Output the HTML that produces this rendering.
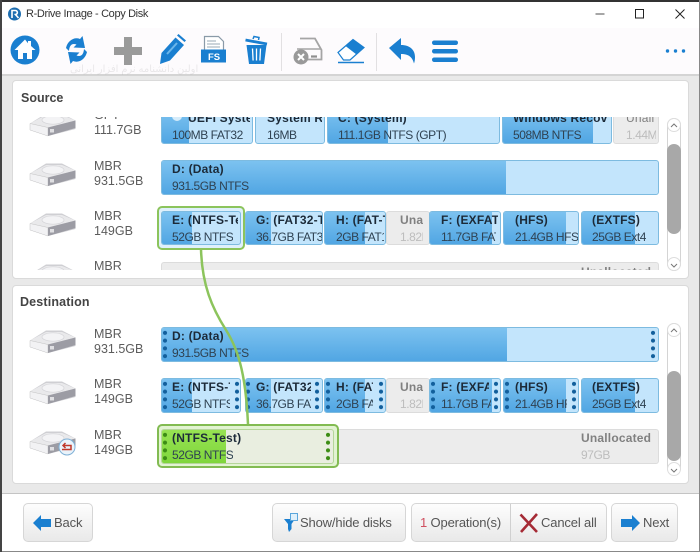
<!DOCTYPE html>
<html><head><meta charset="utf-8"><style>
*{box-sizing:border-box}
html,body{margin:0;padding:0;width:700px;height:552px;overflow:hidden;background:#e9e9e9;font-family:"Liberation Sans",sans-serif}
.a{position:absolute}
.clip{position:absolute;overflow:hidden}
.p{position:absolute;border:1px solid #7dbbe0;border-radius:3px;background:#c3e5fc;overflow:hidden}
.u{position:absolute;border:1px solid #dcdcdc;border-radius:3px;background:#ececec;overflow:hidden}
.f{position:absolute;left:0;top:0;bottom:0;background:linear-gradient(#7cc2f0,#51a6e3)}
.t{position:absolute;white-space:nowrap;overflow:hidden;font-size:12px;line-height:16px;height:16px;color:#2f4252;letter-spacing:-.45px}
.b{font-weight:bold;color:#1c2a38;letter-spacing:.2px}
.g{color:#bdbdbd}.gb{font-weight:bold;color:#808080;letter-spacing:.2px}
.d{position:absolute;width:6px;height:31px;top:1px;background:radial-gradient(circle,#125f9c 1.8px,transparent 2.3px) 0 0/6px 7.75px repeat-y}
.dg{background:radial-gradient(circle,#3c8c14 1.8px,transparent 2.3px) 0 0/6px 7.75px repeat-y}
.m{position:absolute;left:94px;font-size:12.5px;line-height:15px;color:#5c5c5c;white-space:nowrap}
.btn{position:absolute;top:503px;height:39px;border:1px solid #d6d6d6;border-radius:5px;background:linear-gradient(#fdfdfd,#e9e9e9);font-size:13px;color:#555;line-height:37px;white-space:nowrap;letter-spacing:-.15px}
.sb{position:absolute;left:667px;width:14px;border:1px solid #d4d4d4;background:#fff;border-radius:7px}
.th{position:absolute;left:667px;width:14px;background:#a8a8a8;border-radius:7px}
.arr{position:absolute;left:667px;width:14px;height:14px;border:1px solid #ddd;border-radius:7px;background:#fff}
</style></head><body>
<div class="a" style="left:0;top:0;width:700px;height:28px;background:#fff"></div>
<div class="a" style="left:0;top:28px;width:700px;height:47px;background:#fdfbfd"></div>
<div class="a" style="left:0;top:74px;width:700px;height:2px;background:#d4d4d4"></div>

<svg class="a" style="left:0;top:0" width="700" height="76" viewBox="0 0 700 76">
<circle cx="14.5" cy="14" r="6.5" fill="#1c6db0"/><path d="M12 18V10.5h3.2a2 2 0 0 1 .3 4L18.5 18" fill="none" stroke="#fff" stroke-width="1.6"/>
<path d="M595.5 14h9" stroke="#777" stroke-width="1.3"/>
<rect x="635.5" y="9.5" width="8" height="8.5" fill="none" stroke="#222" stroke-width="1"/>
<path d="M675.5 9.5l9 9M684.5 9.5l-9 9" stroke="#222" stroke-width="1"/>
<!-- home -->
<circle cx="25" cy="50" r="14.5" fill="#1a7fd0"/>
<path d="M25 39.5L14.5 50H18v9h5v-6h4v6h5v-9h3.5L31 46v-5h-3v2.200z" fill="#fff"/>
<!-- refresh -->
<path d="M66 48c1.500-7 8-11.500 14-9l2.500-3 2.500 12-11.500-.5 3-3C72 43 69.500 45 69 51z" fill="#1a7fd0"/>
<path d="M87 52c-1.500 7-8 11.500-14 9l-2.500 3-2.500-12 11.500.5-3 3c4.500 1.500 7-.5 7.500-6.500z" fill="#1a7fd0"/>
<!-- plus -->
<path d="M124 37h8v10h10v8h-10v10h-8V55h-10v-8h10z" fill="#9a9a9a"/>
<!-- pencil -->
<path d="M160 64l1.500-11 14-15.500 8.500 7.500-14 15.500z" fill="#1a7fd0"/><path d="M177 35.500l1.500-1.500 7.500 6.500-1.500 1.500z" fill="#1a7fd0"/><path d="M167 54l10-11" stroke="#6cb6ea" stroke-width="2"/>
<!-- FS -->
<path d="M204.500 50V36.500h14l5 5V50" fill="#fff" stroke="#8a9aa8" stroke-width="1.200"/><path d="M207 41h9M207 44h13M207 47h13" stroke="#9aa8b4" stroke-width="1"/>
<rect x="201" y="49.500" width="25" height="13" fill="#1a7fd0"/>
<text x="208" y="60" font-family="Liberation Sans" font-size="9.500" font-weight="bold" fill="#fff">FS</text>
<!-- trash -->
<path d="M245.500 40l21.500 4" stroke="#1a7fd0" stroke-width="2.800"/><path d="M253 39l1-2.500 5 1-.5 2.500" fill="none" stroke="#1a7fd0" stroke-width="1.500"/>
<path d="M246.500 45h20l-2.500 19h-15z" fill="#1a7fd0"/><path d="M252.500 48.500l.6 12M256.500 48.500v12M260.500 48.500l-.6 12" stroke="#fff" stroke-width="1.300"/>
<path d="M281.500 33v38M376.500 33v38" stroke="#e2e0e2" stroke-width="1"/>
<!-- disk x -->
<path d="M300 38.500h15l6.500 11.500v9.500h-22" fill="none" stroke="#a5a5a5" stroke-width="1.800"/><path d="M297 49h24" stroke="#a5a5a5" stroke-width="1.600"/><path d="M311 56.500h6" stroke="#8f8f8f" stroke-width="2.200"/>
<circle cx="301" cy="57" r="7.500" fill="#999"/><path d="M298 54l6 6M304 54l-6 6" stroke="#fff" stroke-width="2"/>
<!-- eraser -->
<path d="M338 52.500L353 39.500l11 8L350 60h-6.500z" fill="#fff" stroke="#1a7fd0" stroke-width="1.200"/><path d="M345.500 46L353 39.500l11 8-7.500 7z" fill="#1a7fd0"/>
<path d="M338 62.500h26" stroke="#1a7fd0" stroke-width="1.600"/>
<!-- undo -->
<path d="M389 48L401 38v7c9 0 14 5 14 12 0 3-.5 5-1 6.500-1.500-6-5-9.500-13-9.500v6z" fill="#1a7fd0"/>
<!-- menu -->
<rect x="432" y="40.500" width="26" height="4.500" rx="2.200" fill="#1a7fd0"/><rect x="432" y="49" width="26" height="4.500" rx="2.200" fill="#1a7fd0"/><rect x="432" y="57.500" width="26" height="4.500" rx="2.200" fill="#1a7fd0"/>
<circle cx="667.500" cy="51" r="1.700" fill="#1a7fd0"/><circle cx="675.500" cy="51" r="1.700" fill="#1a7fd0"/><circle cx="683.500" cy="51" r="1.700" fill="#1a7fd0"/>
<defs>
<g id="disk">
<path d="M1 11.500L17 1.500h16l13.500 7V17L19 24 1 18z" fill="#cfcfd3"/>
<path d="M1 11.500L17 3h16l13.500 5.500L19 15.500z" fill="#e9e9eb"/>
<ellipse cx="24" cy="8" rx="11" ry="4.200" fill="#f3f3f5" stroke="#d4d4d8" stroke-width=".7"/>
<path d="M1 11.500L19 15.500V24L1 18z" fill="#f2f2f4" stroke="#c4c4c4" stroke-width=".5"/>
<path d="M19 15.500L46.500 8.500V16L19 24z" fill="#9c9ca4"/>
<rect x="21" y="17" width="4" height="3.500" fill="#dfdfe2"/>
</g>
</defs>
</svg>
<div class="a" style="left:26px;top:7px;font-size:11px;letter-spacing:-.35px;line-height:14px;color:#333;white-space:nowrap">R-Drive Image - Copy Disk</div>
<div class="a" style="left:70px;top:65px;font-size:10px;line-height:10px;color:#000;opacity:.08;white-space:nowrap;font-family:'Liberation Sans','DejaVu Sans',sans-serif">اولین دانشنامه نرم افزار ایرانی</div>

<!-- panels -->
<div class="a" style="left:12px;top:80px;width:677px;height:199px;background:#fff;border:1px solid #dadada;border-radius:4px"></div>
<div class="a" style="left:12px;top:285px;width:677px;height:199px;background:#fff;border:1px solid #dadada;border-radius:4px"></div>
<div class="a" style="left:21px;top:90px;font-size:12.500px;line-height:16px;font-weight:bold;color:#444">Source</div>
<div class="a" style="left:20px;top:294px;font-size:12.500px;line-height:16px;font-weight:bold;color:#444;letter-spacing:.15px">Destination</div>

<!-- SOURCE -->
<div class="clip" style="left:13px;top:117px;width:650px;height:153px">
 <svg class="a" style="left:16px;top:-17px" width="48" height="200" viewBox="0 0 48 200"><use href="#disk" y="12"/><use href="#disk" y="62"/><use href="#disk" y="112"/><use href="#disk" y="163"/></svg>
 <div class="m" style="left:81px;top:-9px">GPT<br>111.7GB</div>
 <div class="m" style="left:81px;top:42px">MBR<br>931.5GB</div>
 <div class="m" style="left:81px;top:92px">MBR<br>149GB</div>
 <div class="m" style="left:81px;top:142px">MBR</div>

 <div class="p" style="left:148px;top:-8px;width:92px;height:35px"><div class="f" style="width:27px"></div><div class="a" style="left:10px;top:1px;width:10px;height:10px;border-radius:5px;background:#d6ecfa"></div><div class="t b" style="left:26px;top:0;width:62px">UEFI System</div><div class="t" style="left:10px;top:17px">100MB FAT32</div></div>
 <div class="p" style="left:242px;top:-8px;width:70px;height:35px"><div class="t b" style="left:11px;top:0;width:55px">System R</div><div class="t" style="left:11px;top:17px">16MB</div></div>
 <div class="p" style="left:314px;top:-8px;width:173px;height:35px"><div class="f" style="width:60px"></div><div class="t b" style="left:10px;top:0">C: (System)</div><div class="t" style="left:10px;top:17px">111.1GB NTFS (GPT)</div></div>
 <div class="p" style="left:489px;top:-8px;width:110px;height:35px"><div class="f" style="width:90px"></div><div class="t b" style="left:10px;top:0;width:96px">Windows Recov</div><div class="t" style="left:10px;top:17px">508MB NTFS</div></div>
 <div class="u" style="left:600px;top:-8px;width:46px;height:35px"><div class="t gb" style="left:12px;top:0;width:30px;font-weight:normal">Unall</div><div class="t g" style="left:12px;top:17px;width:30px">1.44M</div></div>

 <div class="p" style="left:148px;top:43px;width:498px;height:35px"><div class="f" style="width:344px"></div><div class="t b" style="left:10px;top:0">D: (Data)</div><div class="t" style="left:10px;top:17px">931.5GB NTFS</div></div>

 <div class="a" style="left:143.500px;top:88.500px;width:88px;height:44px;background:#dff0fb;border:2px solid #8cc45c;border-radius:5px"></div>
 <div class="p" style="left:148px;top:94px;width:80px;height:34px"><div class="f" style="width:30px"></div><div class="t b" style="left:10px;top:0;width:66px">E: (NTFS-Test)</div><div class="t" style="left:10px;top:17px">52GB NTFS</div></div>
 <div class="p" style="left:232px;top:94px;width:78px;height:34px"><div class="f" style="width:25px"></div><div class="t b" style="left:10px;top:0;width:66px">G: (FAT32-Test)</div><div class="t" style="left:10px;top:17px;width:66px">36.7GB FAT32</div></div>
 <div class="p" style="left:311px;top:94px;width:62px;height:34px"><div class="f" style="width:40px"></div><div class="t b" style="left:11px;top:0;width:50px">H: (FAT-Test)</div><div class="t" style="left:11px;top:17px;width:48px">2GB FAT12</div></div>
 <div class="u" style="left:373px;top:94px;width:44px;height:34px"><div class="t gb" style="left:13px;top:0;width:23px">Unallocated</div><div class="t g" style="left:13px;top:17px;width:23px">1.82MB</div></div>
 <div class="p" style="left:416px;top:94px;width:72px;height:34px"><div class="f" style="width:62px"></div><div class="t b" style="left:11px;top:0;width:57px">F: (EXFAT-Test)</div><div class="t" style="left:11px;top:17px;width:55px">11.7GB FAT</div></div>
 <div class="p" style="left:490px;top:94px;width:76px;height:34px"><div class="f" style="width:62px"></div><div class="t b" style="left:11px;top:0">(HFS)</div><div class="t" style="left:11px;top:17px;width:63px">21.4GB HFS+</div></div>
 <div class="p" style="left:568px;top:94px;width:78px;height:34px"><div class="f" style="width:53px"></div><div class="t b" style="left:10px;top:0">(EXTFS)</div><div class="t" style="left:10px;top:17px">25GB Ext4</div></div>

 <div class="u" style="left:148px;top:145px;width:498px;height:35px"><div class="t gb" style="left:419px;top:1px">Unallocated</div></div>
</div>
<div class="sb" style="top:118px;height:153px"></div>
<div class="arr" style="top:118px"><svg width="12" height="12"><path d="M3 7l3-3 3 3" fill="none" stroke="#777" stroke-width="1"/></svg></div>
<div class="th" style="top:144px;height:90px"></div>
<div class="arr" style="top:257px"><svg width="12" height="12"><path d="M3 5l3 3 3-3" fill="none" stroke="#777" stroke-width="1"/></svg></div>

<!-- DESTINATION -->
<svg class="a" style="left:29px;top:327px" width="60" height="140" viewBox="0 0 60 140"><use href="#disk" y="2"/><use href="#disk" y="53"/><use href="#disk" y="103"/><circle cx="38" cy="120" r="8" fill="#eaf3fa" stroke="#7fb0d6" stroke-width="1"/><path d="M33 122.500h9v-4h-7M36.500 116l-2.500 2.500 2.500 2.500" fill="none" stroke="#c0392b" stroke-width="1.500"/></svg>
<div class="m" style="top:326.500px">MBR<br>931.5GB</div>
<div class="m" style="top:377px">MBR<br>149GB</div>
<div class="m" style="top:427.500px">MBR<br>149GB</div>

<div class="p" style="left:161px;top:327px;width:498px;height:35px"><div class="f" style="width:345px"></div><div class="t b" style="left:10px;top:0">D: (Data)</div><div class="t" style="left:10px;top:17px">931.5GB NTFS</div><div class="d" style="left:0"></div><div class="d" style="left:488px"></div></div>

<div class="p" style="left:161px;top:378px;width:80px;height:35px"><div class="f" style="width:30px"></div><div class="t b" style="left:10px;top:0;width:58px">E: (NTFS-Test)</div><div class="t" style="left:10px;top:17px;width:58px">52GB NTFS</div><div class="d" style="left:0"></div><div class="d" style="left:72px"></div></div>
<div class="p" style="left:245px;top:378px;width:78px;height:35px"><div class="f" style="width:25px"></div><div class="t b" style="left:10px;top:0;width:55px">G: (FAT32-Test)</div><div class="t" style="left:10px;top:17px;width:55px">36.7GB FAT32</div><div class="d" style="left:-1px"></div><div class="d" style="left:68px"></div></div>
<div class="p" style="left:324px;top:378px;width:62px;height:35px"><div class="f" style="width:40px"></div><div class="t b" style="left:11px;top:0;width:37px">H: (FAT-Test)</div><div class="t" style="left:11px;top:17px;width:37px">2GB FAT12</div><div class="d" style="left:0"></div><div class="d" style="left:53px"></div></div>
<div class="u" style="left:386px;top:378px;width:44px;height:35px"><div class="t gb" style="left:13px;top:0;width:23px">Unallocated</div><div class="t g" style="left:13px;top:17px;width:23px">1.82MB</div></div>
<div class="p" style="left:429px;top:378px;width:72px;height:35px"><div class="f" style="width:62px"></div><div class="t b" style="left:11px;top:0;width:48px">F: (EXFAT-Test)</div><div class="t" style="left:11px;top:17px;width:50px">11.7GB FAT</div><div class="d" style="left:0"></div><div class="d" style="left:63px"></div></div>
<div class="p" style="left:503px;top:378px;width:76px;height:35px"><div class="f" style="width:62px"></div><div class="t b" style="left:11px;top:0">(HFS)</div><div class="t" style="left:11px;top:17px;width:52px">21.4GB HFS+</div><div class="d" style="left:0"></div><div class="d" style="left:67px"></div></div>
<div class="p" style="left:581px;top:378px;width:78px;height:35px"><div class="f" style="width:53px"></div><div class="t b" style="left:10px;top:0">(EXTFS)</div><div class="t" style="left:10px;top:17px">25GB Ext4</div></div>

<div class="u" style="left:161px;top:429px;width:498px;height:35px"><div class="t gb" style="left:419px;top:0">Unallocated</div><div class="t g" style="left:419px;top:17px">97GB</div></div>

<div class="a" style="left:157px;top:424px;width:182px;height:44px;background:#e2f3d2;border:2px solid #82bb52;border-radius:5px"></div>
<div class="a" style="left:161px;top:429px;width:173px;height:35px;background:#e9eee0;border:1px solid #b5d69a;border-radius:3px;overflow:hidden"><div class="f" style="width:64px;background:linear-gradient(#97e352,#7fd63c)"></div><div class="t b" style="left:10px;top:0">(NTFS-Test)</div><div class="t" style="left:10px;top:17px">52GB NTFS</div><div class="d dg" style="left:0"></div><div class="d dg" style="left:163px"></div></div>

<svg class="a" style="left:0;top:0;pointer-events:none" width="700" height="552"><path d="M201 249C202 285 212 308 226 330C240 352 246 380 248 424" fill="none" stroke="#8cc45c" stroke-width="2.500"/></svg>

<div class="sb" style="top:323px;height:152px"></div>
<div class="arr" style="top:323px"><svg width="12" height="12"><path d="M3 7l3-3 3 3" fill="none" stroke="#777" stroke-width="1"/></svg></div>
<div class="th" style="top:371px;height:90px"></div>
<div class="arr" style="top:462px"><svg width="12" height="12"><path d="M3 5l3 3 3-3" fill="none" stroke="#777" stroke-width="1"/></svg></div>

<!-- footer -->
<div class="a" style="left:0;top:493px;width:700px;height:59px;background:#fff;border-top:1px solid #c4c4c4;border-bottom:1px solid #888"></div>

<div class="btn" style="left:23px;width:70px"><svg class="a" style="left:9px;top:11px" width="19" height="16"><path d="M0 8L8 0v4h10v8H8v4z" fill="#1a7fd0"/></svg><span class="a" style="left:30px;top:0">Back</span></div>
<div class="btn" style="left:272px;width:134px"><svg class="a" style="left:11px;top:9px" width="16" height="20"><path d="M0 6h11L7.500 11v5L5 19l-1-3v-5z" fill="#1a7fd0"/><rect x="6.500" y="0.500" width="7" height="7" fill="#dff0fb" stroke="#5aa6dc"/></svg><span class="a" style="left:27px;top:0">Show/hide disks</span></div>
<div class="btn" style="left:411px;width:196px"><span class="a" style="left:8px;top:0"><span style="color:#d05060">1</span> Operation(s)</span><div class="a" style="left:98px;top:0;width:1px;height:37px;background:#d0d0d0"></div><svg class="a" style="left:107px;top:9px" width="20" height="20"><path d="M1.500 1.500L18 19M18 1L2 19" stroke="#a52a35" stroke-width="2.600" fill="none"/></svg><span class="a" style="left:129px;top:0">Cancel all</span></div>
<div class="btn" style="left:611px;width:67px"><svg class="a" style="left:9px;top:11px" width="19" height="16"><path d="M19 8L11 0v4H0v8h11v4z" fill="#1a7fd0"/></svg><span class="a" style="left:31px;top:0">Next</span></div>

<!-- frame -->
<div class="a" style="left:0;top:0;width:700px;height:1.500px;background:#333"></div>
<div class="a" style="left:0;top:0;width:1.500px;height:552px;background:#444"></div>
<div class="a" style="left:699px;top:0;width:1px;height:552px;background:#888"></div>
</body></html>
